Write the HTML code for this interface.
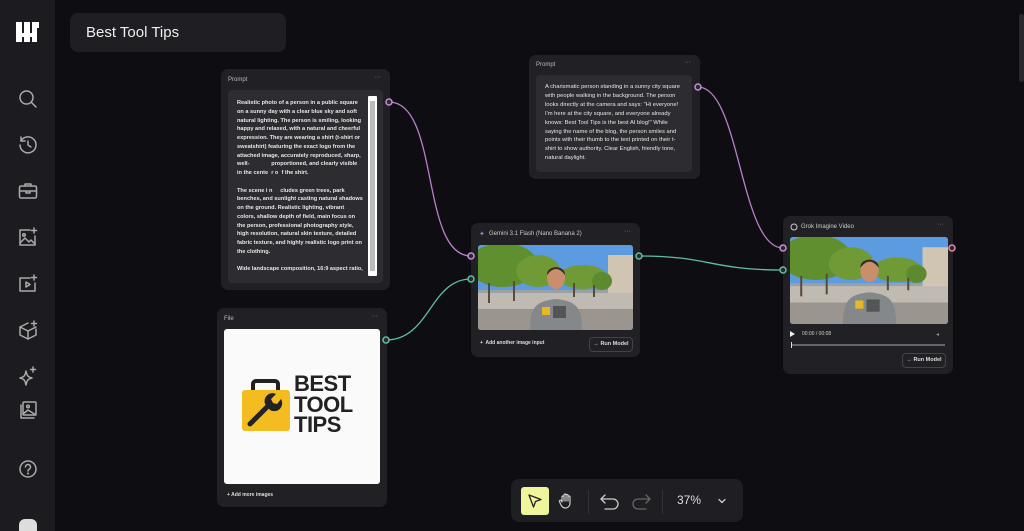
<!DOCTYPE html>
<html><head><meta charset="utf-8"><style>
*{margin:0;padding:0;box-sizing:border-box}
body{width:1024px;height:531px;overflow:hidden;background:#0e0e12;font-family:"Liberation Sans",sans-serif;position:relative;color:#ddd}
.abs{position:absolute}
.side{left:0;top:0;width:55px;height:531px;background:#1c1c20}
.node{position:absolute;background:#212125;border-radius:7px}
.lbl{position:absolute;font-size:6px;color:#bbb}
.dots{position:absolute;font-size:7px;color:#888;letter-spacing:0}
.ta{position:absolute;background:#2c2c31;border-radius:4px;font-size:5.6px;line-height:8.75px;color:#e8e8e8;font-weight:bold;padding:8px 9px}
.btn{position:absolute;border:1px solid #444;border-radius:4px;font-size:5.5px;color:#ddd;text-align:center;font-weight:bold}
svg.ic{position:absolute;stroke:#aaa;fill:none;stroke-width:1.5;stroke-linecap:round;stroke-linejoin:round}
</style></head><body>
<div class="abs side"></div>
<!-- logo -->
<svg class="abs" style="left:16px;top:22px" width="23" height="20" viewBox="0 0 23 20"><path d="M0 0h6v11h2V0h6v11h2V0h7v6h-2v14h-5v-5h-2v5H8v-5H6v5H0z" fill="#fff"/></svg>
<svg class="ic" style="left:18px;top:89px" width="20" height="20" viewBox="0 0 20 20"><circle cx="8.5" cy="8.5" r="6.5"/><path d="M13.5 13.5l4.5 4.5"/></svg>
<svg class="ic" style="left:18px;top:135px" width="20" height="20" viewBox="0 0 20 20"><path d="M3 6a8 8 0 1 1-1 4"/><path d="M3 2v4h4"/><path d="M10 6v4l3 2"/></svg>
<svg class="ic" style="left:18px;top:181px" width="20" height="20" viewBox="0 0 20 20"><rect x="1.5" y="5" width="17" height="12" rx="1.5"/><path d="M7 5V3h6v2M1.5 10h17M8 10v2h4v-2"/></svg>
<svg class="ic" style="left:18px;top:227px" width="20" height="20" viewBox="0 0 20 20"><path d="M12 3H2v15h15V9"/><circle cx="6" cy="8" r="1.3"/><path d="M2 16l5-5 4 4 2-2 4 4"/><path d="M16 1v5M13.5 3.5h5"/></svg>
<svg class="ic" style="left:18px;top:274px" width="20" height="20" viewBox="0 0 20 20"><path d="M12 4H2v13h15V9"/><path d="M8 8v5l4-2.5z"/><path d="M16 1v5M13.5 3.5h5"/></svg>
<svg class="ic" style="left:18px;top:320px" width="20" height="20" viewBox="0 0 20 20"><path d="M10 3L2 7v8l8 4 8-4V9"/><path d="M2 7l8 4 8-4M10 11v8"/><path d="M16 1v5M13.5 3.5h5"/></svg>
<svg class="ic" style="left:18px;top:366px" width="20" height="20" viewBox="0 0 20 20"><path d="M8 5c1 5 2 6 6 7-4 1-5 2-6 7-1-5-2-6-6-7 4-1 5-2 6-7z"/><path d="M15 1v5M12.5 3.5h5"/></svg>
<svg class="ic" style="left:18px;top:400px" width="20" height="20" viewBox="0 0 20 20"><rect x="5" y="2" width="13" height="13" rx="1"/><path d="M3 5v13h13"/><circle cx="10" cy="6.5" r="1.3"/><path d="M5 14l5-4 8 5"/></svg>
<svg class="ic" style="left:18px;top:459px" width="20" height="20" viewBox="0 0 20 20"><circle cx="10" cy="10" r="8"/><path d="M7.5 8a2.5 2.5 0 1 1 3.5 2.3c-.7.4-1 .9-1 1.7"/><circle cx="10" cy="14.5" r=".4"/></svg>
<div class="abs" style="left:19px;top:519px;width:18px;height:12px;background:#ddd;border-radius:6px 6px 0 0"></div>
<div class="abs" style="left:1019px;top:14px;width:5px;height:68px;background:#2a2a2e;border-radius:3px"></div>

<!-- title -->
<div class="abs" style="left:70px;top:13px;width:216px;height:39px;background:#1f1f23;border-radius:8px;font-size:15px;color:#eee;padding:11px 0 0 16px">Best Tool Tips</div>

<!-- wires -->
<svg class="abs" style="left:0;top:0" width="1024" height="531">
<g fill="none" stroke-width="1.3">
<path d="M389 102 C440 102 420 256 471 256" stroke="#b77fc8"/>
<path d="M386 340 C430 340 430 279 471 279" stroke="#5ec0a0"/>
<path d="M639 256 C710 256 710 270 783 270" stroke="#5ec0a0"/>
<path d="M698 87 C740 87 740 248 783 248" stroke="#b77fc8"/>
</g>
</svg>

<!-- Prompt 1 -->
<div class="node" style="left:221px;top:69px;width:169px;height:221px"></div>
<div class="lbl" style="left:228px;top:77px">Prompt</div>
<div class="dots" style="left:374px;top:74px">···</div>
<div class="ta" style="left:228px;top:90px;width:155px;height:193px;padding-right:20px;padding-top:9px">Realistic photo of a person in a public square on a sunny day with a clear blue sky and soft natural lighting. The person is smiling, looking happy and relaxed, with a natural and cheerful expression. They are wearing a shirt (t-shirt or sweatshirt) featuring the exact logo from the attached image, accurately reproduced, sharp, well-&nbsp;&nbsp;&nbsp;&nbsp;&nbsp;&nbsp;&nbsp;&nbsp;&nbsp;&nbsp;&nbsp;&nbsp;&nbsp;&nbsp;proportioned, and clearly visible in the cente&nbsp; r o&nbsp; f the shirt.<br><br>The scene i n&nbsp;&nbsp;&nbsp;&nbsp; cludes green trees, park benches, and sunlight casting natural shadows on the ground. Realistic lighting, vibrant colors, shallow depth of field, main focus on the person, professional photography style, high resolution, natural skin texture, detailed fabric texture, and highly realistic logo print on the clothing.<br><br>Wide landscape composition, 16:9 aspect ratio,</div>
<div class="abs" style="left:368px;top:96px;width:9px;height:180px;background:#fff;border-radius:1px"></div>
<div class="abs" style="left:370px;top:101px;width:5px;height:170px;background:#bbb"></div>

<!-- Prompt 2 -->
<div class="node" style="left:529px;top:55px;width:171px;height:124px"></div>
<div class="lbl" style="left:536px;top:62px">Prompt</div>
<div class="dots" style="left:684px;top:59px">···</div>
<div class="ta" style="left:536px;top:75px;width:156px;height:97px;font-weight:normal;padding:8px 8px 0 9px;font-size:5.8px;line-height:8.9px">A charismatic person standing in a sunny city square with people walking in the background. The person looks directly at the camera and says: "Hi everyone! I'm here at the city square, and everyone already knows: Best Tool Tips is the best AI blog!" While saying the name of the blog, the person smiles and points with their thumb to the text printed on their t-shirt to show authority. Clear English, friendly tone, natural daylight.</div>

<!-- photo template -->
<svg width="0" height="0" style="position:absolute"><defs>
<symbol id="ph" viewBox="0 0 155 85" preserveAspectRatio="none">
<rect width="155" height="85" fill="#9aa0a6"/>
<rect width="155" height="45" fill="#5d9be0"/>
<rect x="130" y="10" width="25" height="40" fill="#cfc5b2"/>
<ellipse cx="25" cy="20" rx="35" ry="22" fill="#5f8f2e"/>
<ellipse cx="60" cy="26" rx="22" ry="16" fill="#6f9a35"/>
<ellipse cx="105" cy="32" rx="24" ry="12" fill="#6f9a35"/>
<ellipse cx="124" cy="36" rx="10" ry="9" fill="#5e8a2f"/>
<rect y="48" width="155" height="37" fill="#c0bbb2"/>
<rect y="64" width="155" height="21" fill="#9a968f"/>
<g fill="#5a4a3a"><rect x="10" y="38" width="2" height="20"/><rect x="35" y="36" width="2" height="20"/><rect x="95" y="38" width="2" height="14"/><rect x="115" y="40" width="2" height="12"/></g>
<path d="M52 85 C52 62 58 56 78 54 C98 56 104 62 104 85z" fill="#85888b"/>
<ellipse cx="78" cy="33" rx="9" ry="11" fill="#c98f6c"/>
<path d="M69 30 Q78 18 87 30 Q87 23 78 22 Q69 23 69 30z" fill="#3a2a20"/>
<rect x="64" y="62" width="8" height="8" fill="#e7b824"/>
<rect x="75" y="61" width="13" height="12" fill="#333" opacity=".6"/>
</symbol></defs></svg>

<!-- Gemini node -->
<div class="node" style="left:471px;top:223px;width:169px;height:134px"></div>
<div class="abs" style="left:479px;top:230px;font-size:7px;color:#9b7de0">✦</div>
<div class="lbl" style="left:489px;top:231px;color:#ccc">Gemini 3.1 Flash (Nano Banana 2)</div>
<div class="dots" style="left:624px;top:228px">···</div>
<svg class="abs" style="left:478px;top:245px;border-radius:3px" width="155" height="85"><use href="#ph"/></svg>
<div class="abs" style="left:480px;top:340px;font-size:5px;color:#ddd;font-weight:bold">+&nbsp; Add another image input</div>
<div class="btn" style="left:589px;top:337px;width:44px;height:15px;line-height:13px">→ Run Model</div>

<!-- Grok node -->
<div class="node" style="left:783px;top:216px;width:170px;height:158px"></div>
<svg class="ic" style="left:790px;top:223px;stroke:#ccc;stroke-width:1" width="8" height="8" viewBox="0 0 8 8"><circle cx="4" cy="4" r="3"/></svg>
<div class="lbl" style="left:801px;top:224px;color:#ccc">Grok Imagine Video</div>
<div class="dots" style="left:937px;top:221px">···</div>
<svg class="abs" style="left:790px;top:237px;border-radius:3px" width="158" height="87"><use href="#ph"/></svg>
<div class="abs" style="left:790px;top:331px;width:0;height:0;border-left:5px solid #eee;border-top:3px solid transparent;border-bottom:3px solid transparent"></div>
<div class="abs" style="left:802px;top:331px;font-size:5px;color:#ccc">00:00 / 00:08</div>
<div class="abs" style="left:936px;top:331px;font-size:6px;color:#888">◂</div>
<div class="abs" style="left:791px;top:344px;width:154px;height:2px;background:#666"></div>
<div class="abs" style="left:791px;top:342px;width:1px;height:6px;background:#ddd"></div>
<div class="btn" style="left:902px;top:353px;width:44px;height:15px;line-height:13px">→ Run Model</div>

<!-- File node -->
<div class="node" style="left:217px;top:308px;width:170px;height:199px"></div>
<div class="lbl" style="left:224px;top:316px">File</div>
<div class="dots" style="left:371px;top:313px">···</div>
<div class="abs" style="left:224px;top:329px;width:156px;height:155px;background:#fafafa;border-radius:3px"></div>
<svg class="abs" style="left:241px;top:378px" width="50" height="54" viewBox="0 0 50 54"><path d="M12 12V6a3 3 0 0 1 3-3h19a3 3 0 0 1 3 3v6" fill="none" stroke="#222" stroke-width="4"/><rect x="1" y="12" width="48" height="41" rx="3" fill="#f3bd22"/><path d="M9 46l17-17" stroke="#222" stroke-width="5" stroke-linecap="round"/><path d="M24 26a8 8 0 0 1 11-10l-5 5 2 4 4 1 4-5a8 8 0 0 1-11 11z" fill="#222"/></svg>
<div class="abs" style="left:294px;top:374px;font-size:22px;line-height:20.5px;font-weight:bold;color:#222;letter-spacing:-0.5px">BEST<br>TOOL<br>TIPS</div>
<div class="abs" style="left:227px;top:492px;font-size:5px;color:#ddd;font-weight:bold">+ Add more images</div>

<!-- ports -->
<svg class="abs" style="left:0;top:0" width="1024" height="531">
<g stroke-width="1.5" fill="#2a2a2e">
<circle cx="389" cy="102" r="3" stroke="#c58fd8"/>
<circle cx="698" cy="87" r="3" stroke="#c58fd8"/>
<circle cx="471" cy="256" r="3" stroke="#c58fd8"/>
<circle cx="471" cy="279" r="3" stroke="#5ec0a0"/>
<circle cx="639" cy="256" r="3" stroke="#5ec0a0"/>
<circle cx="386" cy="340" r="3" stroke="#5ec0a0"/>
<circle cx="783" cy="248" r="3" stroke="#c58fd8"/>
<circle cx="783" cy="270" r="3" stroke="#5ec0a0"/>
<circle cx="952" cy="248" r="3" stroke="#e08aa0"/>
</g></svg>

<!-- toolbar -->
<div class="abs" style="left:511px;top:479px;width:232px;height:43px;background:#1f1f23;border-radius:8px"></div>
<div class="abs" style="left:521px;top:487px;width:28px;height:28px;background:#eef59a;border-radius:3px"></div>
<svg class="ic" style="left:527px;top:493px;stroke:#222;stroke-width:1.3" width="16" height="16" viewBox="0 0 16 16"><path d="M2 2l12 4.5-5.5 2-2 5.5z"/></svg>
<svg class="ic" style="left:557px;top:492px;stroke:#ccc;stroke-width:1.2" width="18" height="18" viewBox="0 0 18 18"><path d="M5 10V5a1 1 0 0 1 2 0v4V3a1 1 0 0 1 2 0v6V3.5a1 1 0 0 1 2 0V9V5a1 1 0 0 1 2 0v6c0 3-2 5-4.5 5S5 15 3.5 12L2.5 9.5a1 1 0 0 1 2-.5z"/></svg>
<div class="abs" style="left:588px;top:490px;width:1px;height:24px;background:#333"></div>
<svg class="ic" style="left:599px;top:491px;stroke:#ccc;stroke-width:1.3" width="22" height="20" viewBox="0 0 22 20"><path d="M6 4L2 8l4 4"/><path d="M2 8h12a5 5 0 0 1 0 10H6"/></svg>
<svg class="ic" style="left:630px;top:491px;stroke:#666;stroke-width:1.3" width="22" height="20" viewBox="0 0 22 20"><path d="M16 4l4 4-4 4"/><path d="M20 8H8a5 5 0 0 0 0 10h8"/></svg>
<div class="abs" style="left:662px;top:490px;width:1px;height:24px;background:#333"></div>
<div class="abs" style="left:677px;top:493px;font-size:12px;color:#ddd">37%</div>
<svg class="ic" style="left:717px;top:496px;stroke:#ccc;stroke-width:1.3" width="10" height="10" viewBox="0 0 10 10"><path d="M2 3.5l3 3 3-3"/></svg>
</body></html>
